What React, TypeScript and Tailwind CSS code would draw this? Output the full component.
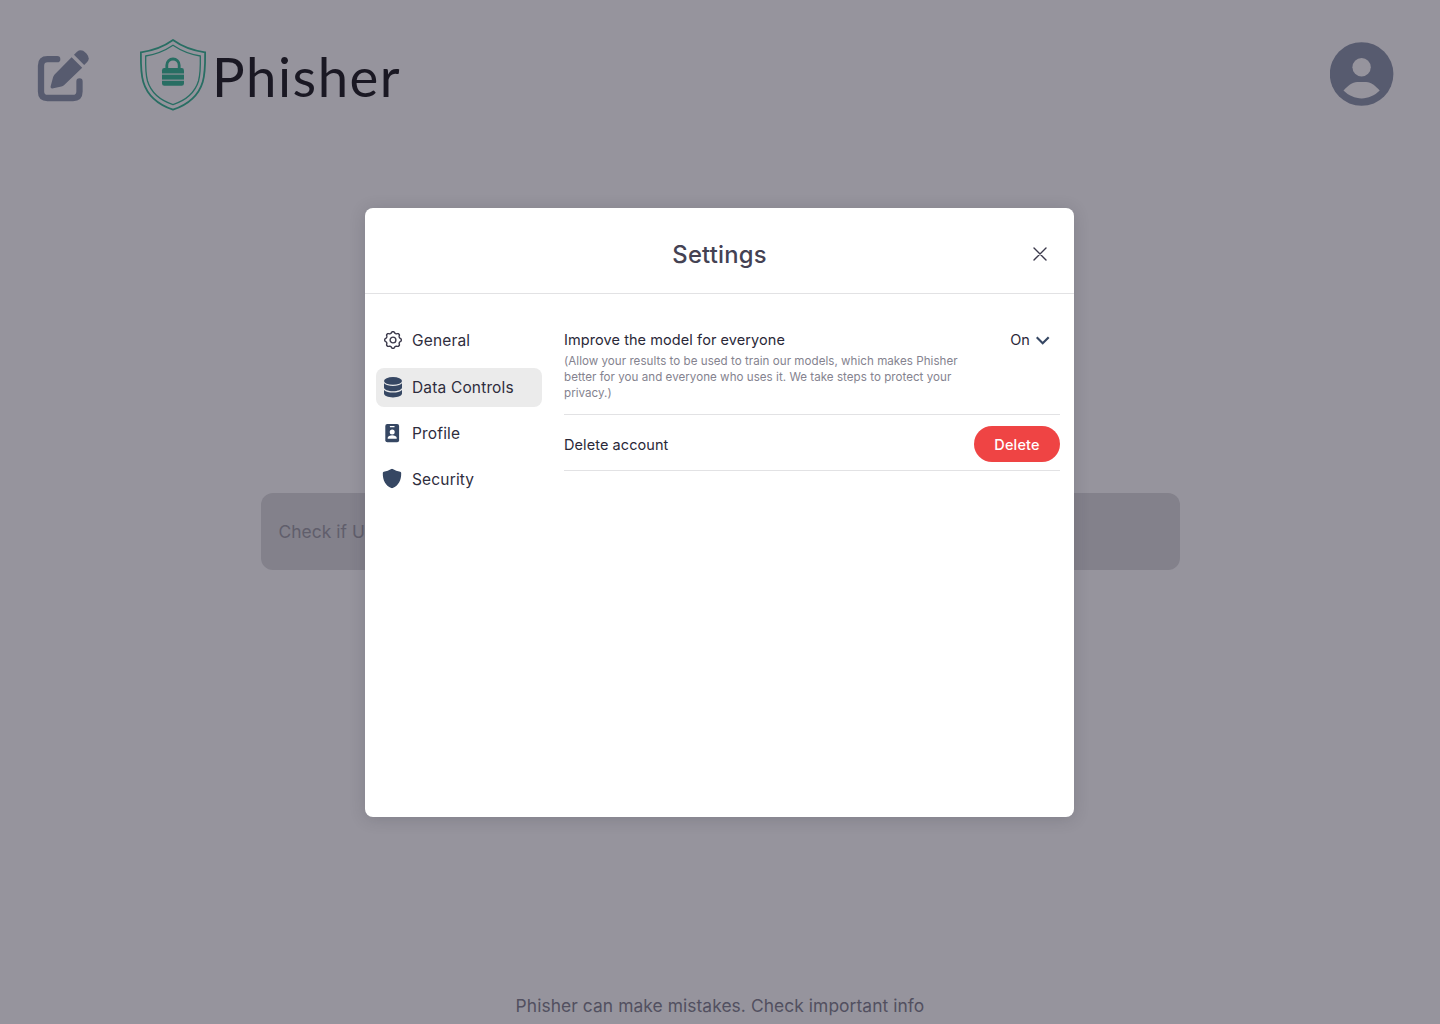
import type { ReactNode } from 'react';

const gearPath =
  Array.from({ length: 96 }, (_, i) => {
    const a = (i / 96) * Math.PI * 2;
    const r = 7.6 + 0.8 * Math.tanh(1.5 * Math.cos(8 * a));
    return `${i ? 'L' : 'M'}${(10 + r * Math.sin(a)).toFixed(2)} ${(10 - r * Math.cos(a)).toFixed(2)}`;
  }).join('') + 'Z';

function ComposeIcon() {
  return (
    <svg width="54" height="54" viewBox="36 49 54 54" className="mt-px text-[#575b6f]" fill="currentColor">
      <path
        d="M57.2 59.2H47.5Q41 59.2 41 65.7V91.5Q41 98 47.5 98H73Q79.5 98 79.5 91.5V81.5"
        fill="none"
        stroke="currentColor"
        strokeWidth="6.3"
        strokeLinecap="round"
      />
      <path d="M71.6 57.2L82.2 67.8L64.2 85Q63 86.2 61.4 86.6L52.2 88.4Q50.2 88.6 50.6 86.6L53 77.4Q53.4 75.8 54.6 74.4Z" />
      <path d="M74 54.8L77 51.8Q81.2 48.4 85.6 52.8L86.6 53.8Q90.6 58.6 87.2 62L84.2 65Z" />
    </svg>
  );
}

function LogoMark() {
  return (
    <svg width="68" height="73" viewBox="139 38 68 73" fill="none" stroke="#286e63" className="-mt-[2px]">
      <path
        strokeWidth="1.8"
        d="M173 40C164 46.5 152 50.8 140.9 52.3C140.8 63 140.6 73 143.3 82C147.4 95.5 158.5 104.8 173 109.7C187.5 104.8 198.6 95.5 202.7 82C205.4 73 205.2 63 205.1 52.3C194 50.8 182 46.5 173 40Z"
      />
      <path
        strokeWidth="1.3"
        d="M173 45.3C165 50.7 155 54.6 145.7 56C145.5 65 145.4 73.5 147.5 81C151 92.5 160.5 100.4 173 104.6C185.5 100.4 195 92.5 198.5 81C200.6 73.5 200.5 65 200.3 56C191 54.6 181 50.7 173 45.3Z"
      />
      <path strokeWidth="2.8" d="M166.8 69V65.2a6.2 6.2 0 0 1 12.4 0V69" />
      <g fill="#286e63" stroke="none">
        <path d="M164.4 68h17.2q2.4 0 2.4 2.4V73.4h-22V70.4q0-2.4 2.4-2.4Z" />
        <path d="M162 74.6h22v5h-22Z" />
        <path d="M162 80.8h22v2.8q0 2.2-2.4 2.2h-17.2q-2.4 0-2.4-2.2Z" />
      </g>
    </svg>
  );
}

function AvatarIcon() {
  return (
    <svg width="64" height="64" viewBox="0 0 64 64" className="-mt-[2px]">
      <circle cx="31.6" cy="32" r="31.8" fill="#575b6f" />
      <g fill="#96949d">
        <circle cx="31.6" cy="25.2" r="9.2" />
        <path d="M13.5 48.6C17.9 43.4 22.2 39.9 27.2 39.9H36.2C41.2 39.9 45.3 43.4 49.7 48.6C44.5 53.8 38.3 56.4 31.6 56.4S18.7 53.8 13.5 48.6Z" />
      </g>
    </svg>
  );
}

function GearIcon() {
  return (
    <svg width="20" height="20" viewBox="0 0 20 20" fill="none" stroke="#3b394b" strokeWidth="1.4">
      <path d={gearPath} strokeLinejoin="round" />
      <circle cx="10" cy="10" r="2.9" />
    </svg>
  );
}

function DatabaseIcon() {
  return (
    <svg width="20" height="22" viewBox="0 0 20 22" fill="#364763">
      <ellipse cx="10" cy="4.9" rx="9" ry="3.9" />
      <path d="M1 7.2Q4 9.9 10 9.9T19 7.2V11.6C19 13.7 15 15.3 10 15.3S1 13.7 1 11.6Z" />
      <path d="M1 13.9Q4 16.6 10 16.6T19 13.9V17.6C19 19.8 15 21.4 10 21.4S1 19.8 1 17.6Z" />
    </svg>
  );
}

function BadgeIcon() {
  return (
    <svg width="20" height="20" viewBox="0 0 20 20" className="-translate-x-[0.5px]">
      <rect x="2.8" y="1" width="13.8" height="18.2" rx="2" fill="#364763" />
      <g fill="#fff">
        <rect x="7.3" y="2.9" width="4.8" height="1.3" rx="0.5" />
        <circle cx="9.7" cy="9" r="2.5" />
        <path d="M5.2 15.8V14.8C5.2 13 7.7 12.2 9.7 12.2S14.2 13 14.2 14.8V15.8Z" />
      </g>
    </svg>
  );
}

function ShieldIcon() {
  return (
    <svg width="20" height="20" viewBox="0 0 20 20" className="-translate-x-px -translate-y-[0.5px]">
      <path
        fill="#364763"
        d="M9.3.4Q10 0 10.7.4Q14 2.7 18.2 3.2Q19.2 3.4 19.2 4.4C19.4 11.6 16.6 17 10.7 19.5Q10 19.8 9.3 19.5C3.4 17 .6 11.6.8 4.4Q.8 3.4 1.8 3.2Q6 2.7 9.3.4Z"
      />
    </svg>
  );
}

function NavItem({ icon, label, active, className }: { icon: ReactNode; label: string; active?: boolean; className?: string }) {
  return (
    <button
      className={`flex h-[39px] w-[166px] items-center rounded-lg pb-px pl-[7px] text-left text-[15.5px] tracking-[0.16px] text-[#2f2d3d] ${active ? 'bg-[#ebebeb]' : ''} ${className ?? ''}`}
    >
      <span className="flex w-[29px] shrink-0">{icon}</span>
      <span className="pt-[2px]">{label}</span>
    </button>
  );
}

function SettingsDialog() {
  return (
    <section className="flex h-[609px] w-[709px] flex-col rounded-lg bg-white shadow-[0_2px_16px_rgba(40,38,50,0.18)]">
      <header className="grid h-[86px] shrink-0 grid-cols-[1fr_auto_1fr] items-center border-b border-[#e2e2e4] pt-[7px]">
        <h1 className="col-start-2 pt-px text-[23.8px] font-medium tracking-[0.2px] text-[#444253]">Settings</h1>
        <button className="mr-[27px] justify-self-end" aria-label="Close">
          <svg width="14" height="14" viewBox="0 0 14 14" fill="none" stroke="#3b394b" strokeWidth="1.4" strokeLinecap="round">
            <path d="M1 1L13 13M13 1L1 13" />
          </svg>
        </button>
      </header>
      <div className="flex grow">
        <nav className="flex flex-col gap-[7px] pl-[11px] pt-[27px]">
          <NavItem icon={<GearIcon />} label="General" />
          <NavItem active className="mt-px" icon={<DatabaseIcon />} label="Data Controls" />
          <NavItem icon={<BadgeIcon />} label="Profile" />
          <NavItem icon={<ShieldIcon />} label="Security" />
        </nav>
        <div className="ml-[22px] mr-[14px] grow text-[#2a2838]">
          <div className="h-[121px] border-b border-[#e2e2e4] pt-[36px]">
            <div className="flex h-5 items-center justify-between pr-[10.5px] text-[14.5px] tracking-[0.08px]">
              <span>Improve the model for everyone</span>
              <span className="flex items-center gap-[5.5px]">
                On
                <svg width="14" height="9" viewBox="0 0 14 9" fill="none" stroke="#364763" strokeWidth="2.2" className="mt-px">
                  <path d="M.7 1.2L6.7 7.2L12.7 1.2" />
                </svg>
              </span>
            </div>
            <p className="mt-[3px] text-[11.6px] leading-4 tracking-[0.03px] whitespace-nowrap text-[#85838f]">
              (Allow your results to be used to train our models, which makes Phisher
              <br />
              better for you and everyone who uses it. We take steps to protect your
              <br />
              privacy.)
            </p>
          </div>
          <div className="flex h-[56px] items-center justify-between border-b border-[#e2e2e4] pt-[3px]">
            <span className="pt-[2px] text-[14.5px] tracking-[0.08px]">Delete account</span>
            <button className="h-9 w-[86px] rounded-full bg-[#ef4444] pt-[2px] text-[14.5px] font-medium tracking-[0.17px] text-white">
              Delete
            </button>
          </div>
        </div>
      </div>
    </section>
  );
}

export default function App() {
  return (
    <div className="relative flex h-[1024px] w-[1440px] flex-col overflow-hidden bg-[#96949d] font-['Inter',sans-serif]">
      <header className="flex h-[150px] shrink-0 items-center justify-between pl-9 pr-[46px]">
        <div className="flex items-center">
          <ComposeIcon />
          <div className="ml-[49px] flex items-center">
            <LogoMark />
            <span className="ml-[5px] pt-px font-['Lato',sans-serif] text-[54.5px] leading-[64px] tracking-[1.5px] text-[#1a1823]">
              Phisher
            </span>
          </div>
        </div>
        <AvatarIcon />
      </header>
      <main className="flex grow justify-center pt-[343px]">
        <div className="flex h-[77px] w-[919px] items-center rounded-xl bg-[#83818b] pt-[2px] pl-[18px] text-[17.4px] tracking-[0.04px] text-[#605e6b]">
          Check if URL is safe
        </div>
      </main>
      <footer className="flex h-9 shrink-0 items-center justify-center text-[17.4px] tracking-[0.07px] text-[#525060]">
        Phisher can make mistakes. Check important info
      </footer>
      <div className="absolute inset-0 flex items-start justify-center pr-px pt-[208px]">
        <SettingsDialog />
      </div>
    </div>
  );
}
